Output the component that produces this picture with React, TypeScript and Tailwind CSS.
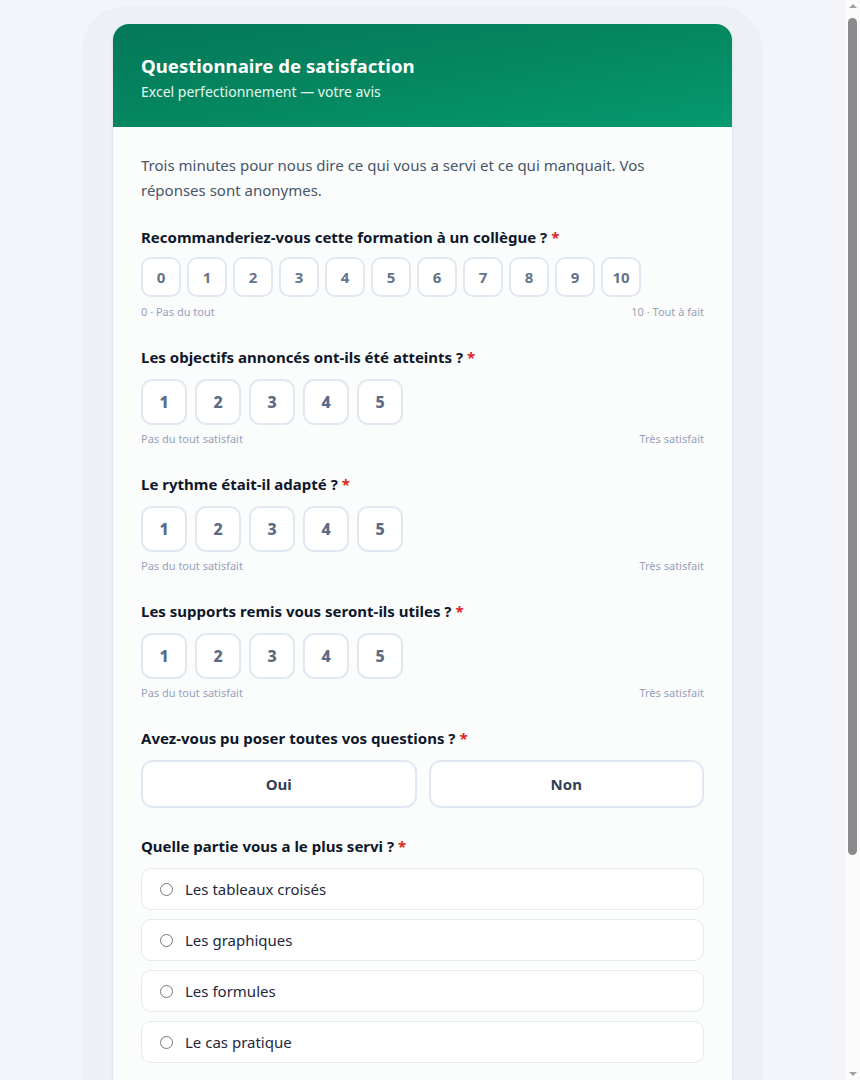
import { useState } from "react";

const font = { fontFamily: '"Noto Sans", "Open Sans", Arial, sans-serif' };

const parts = [
  "Les tableaux croisés",
  "Les graphiques",
  "Les formules",
  "Le cas pratique",
];

function Label({ text, tight }: { text: string; tight?: boolean }) {
  return (
    <p
      className={
        "text-[15px] font-bold leading-5 text-[#0f172a] " + (tight ? "mb-[10px]" : "mb-3")
      }
    >
      {text} <span className="text-[#dc2626]">*</span>
    </p>
  );
}

function Scale5({ value, onPick }: { value: number | null; onPick: (n: number) => void }) {
  return (
    <div>
      <div className="flex gap-2">
        {[1, 2, 3, 4, 5].map((n) => (
          <button
            key={n}
            onClick={() => onPick(n)}
            className={
              "flex h-[46px] w-[46px] items-center justify-center rounded-[11px] border-2 text-base font-extrabold " +
              (value === n
                ? "border-[#059669] bg-[#059669] text-white"
                : "border-[#e2e8f2] bg-white text-[#5b6b85]")
            }
          >
            {n}
          </button>
        ))}
      </div>
      <div className="mt-1.5 flex justify-between text-[11px] leading-4 text-[#979fbb]">
        <span>Pas du tout satisfait</span>
        <span>Très satisfait</span>
      </div>
    </div>
  );
}

// the reference shows a classic browser scrollbar; headless hides it, so it is drawn here
function FakeScrollbar() {
  return (
    <div className="flex h-screen w-[15px] shrink-0 flex-col items-center bg-[#fafbfa]">
      <div className="mt-[4px] h-0 w-0 border-x-[4px] border-b-[4px] border-x-transparent border-b-[#a3a3a3]" />
      <div className="mt-[10px] h-[837px] w-[9px] rounded-full bg-[#8b8a8f]" />
      <div className="flex-1" />
      <div className="mb-[4px] h-0 w-0 border-x-[4px] border-t-[4px] border-x-transparent border-t-[#a3a3a3]" />
    </div>
  );
}

export default function App() {
  const [nps, setNps] = useState<number | null>(null);
  const [scores, setScores] = useState<Record<string, number | null>>({});
  const [yesNo, setYesNo] = useState<string | null>(null);
  const [part, setPart] = useState<string | null>(null);

  const scaleQuestions = [
    "Les objectifs annoncés ont-ils été atteints ?",
    "Le rythme était-il adapté ?",
    "Les supports remis vous seront-ils utiles ?",
  ];

  return (
    <div className="flex h-screen overflow-hidden" style={font}>
      <div className="h-screen flex-1 overflow-y-auto bg-[#f3f5fa] [scrollbar-width:none]">
        <div className="px-[82px] pt-[6px] pb-6">
          <div className="rounded-[44px] bg-[#edf1f6] px-[31px] pt-[18px] pb-[18px]">
            <div className="overflow-hidden rounded-2xl bg-[#fbfdfc] shadow-[0_1px_3px_rgba(99,102,180,0.18)]">
              <div className="bg-gradient-to-br from-[#04785a] via-[#05875f] to-[#059a6e] px-7 pt-[28px] pb-[25px]">
                <h1 className="text-[18.6px] font-bold leading-7 text-white">Questionnaire de satisfaction</h1>
                <p className="mt-0.5 text-sm leading-5 text-[#e3f7ee]">Excel perfectionnement — votre avis</p>
              </div>

              <div className="px-7 pt-[26px] pb-7">
                <p className="mb-[24px] text-[15px] leading-[25px] text-[#475569]">
                  Trois minutes pour nous dire ce qui vous a servi et ce qui manquait. Vos réponses sont
                  anonymes.
                </p>

                <div className="flex flex-col gap-[27px]">
                  <div>
                    <Label text="Recommanderiez-vous cette formation à un collègue ?" tight />
                    <div className="flex gap-1.5">
                      {Array.from({ length: 11 }, (_, i) => i).map((n) => (
                        <button
                          key={n}
                          onClick={() => setNps(n)}
                          className={
                            "flex h-10 w-10 items-center justify-center rounded-[10px] border-2 text-[15px] font-bold " +
                            (nps === n
                              ? "border-[#059669] bg-[#059669] text-white"
                              : "border-[#e2e8f2] bg-white text-[#64748b]")
                          }
                        >
                          {n}
                        </button>
                      ))}
                    </div>
                    <div className="mt-[7px] flex justify-between text-[11px] leading-4 text-[#979fbb]">
                      <span>0 · Pas du tout</span>
                      <span>10 · Tout à fait</span>
                    </div>
                  </div>

                  {scaleQuestions.map((q) => (
                    <div key={q}>
                      <Label text={q} />
                      <Scale5 value={scores[q] ?? null} onPick={(n) => setScores({ ...scores, [q]: n })} />
                    </div>
                  ))}

                  <div>
                    <Label text="Avez-vous pu poser toutes vos questions ?" />
                    <div className="mb-px grid grid-cols-2 gap-3">
                      {["Oui", "Non"].map((o) => (
                        <button
                          key={o}
                          onClick={() => setYesNo(o)}
                          className={
                            "h-12 rounded-xl border-2 text-[15px] font-bold " +
                            (yesNo === o
                              ? "border-[#059669] bg-[#ecfdf5] text-[#047857]"
                              : "border-[#e2e8f2] bg-white text-[#334155]")
                          }
                        >
                          {o}
                        </button>
                      ))}
                    </div>
                  </div>

                  <div>
                    <Label text="Quelle partie vous a le plus servi ?" />
                    <div className="flex flex-col gap-[9px]">
                      {parts.map((p) => (
                        <label
                          key={p}
                          className="flex h-[42px] cursor-pointer items-center gap-[12px] rounded-[10px] border border-[#e5e9f2] bg-white px-[18px] text-[15px] text-[#1e293b]"
                        >
                          <input
                            type="radio"
                            name="part"
                            checked={part === p}
                            onChange={() => setPart(p)}
                            className="h-[13px] w-[13px] accent-[#059669]"
                          />
                          {p}
                        </label>
                      ))}
                    </div>
                  </div>

                  <div>
                    <p className="mb-3 text-[15px] font-bold leading-5 text-[#0f172a]">
                      Un commentaire à ajouter ?
                    </p>
                    <textarea
                      rows={3}
                      placeholder="Ce qui vous a plu, ce qui pourrait être amélioré…"
                      className="h-24 w-full resize-none rounded-[10px] border border-[#e5e9f2] bg-white px-4 py-3 text-[15px] text-[#1e293b] outline-none"
                    />
                  </div>

                  <button className="h-12 rounded-xl bg-[#059669] text-[15px] font-bold text-white">
                    Envoyer mes réponses
                  </button>
                </div>
              </div>
            </div>
          </div>
        </div>
      </div>
      <FakeScrollbar />
    </div>
  );
}
